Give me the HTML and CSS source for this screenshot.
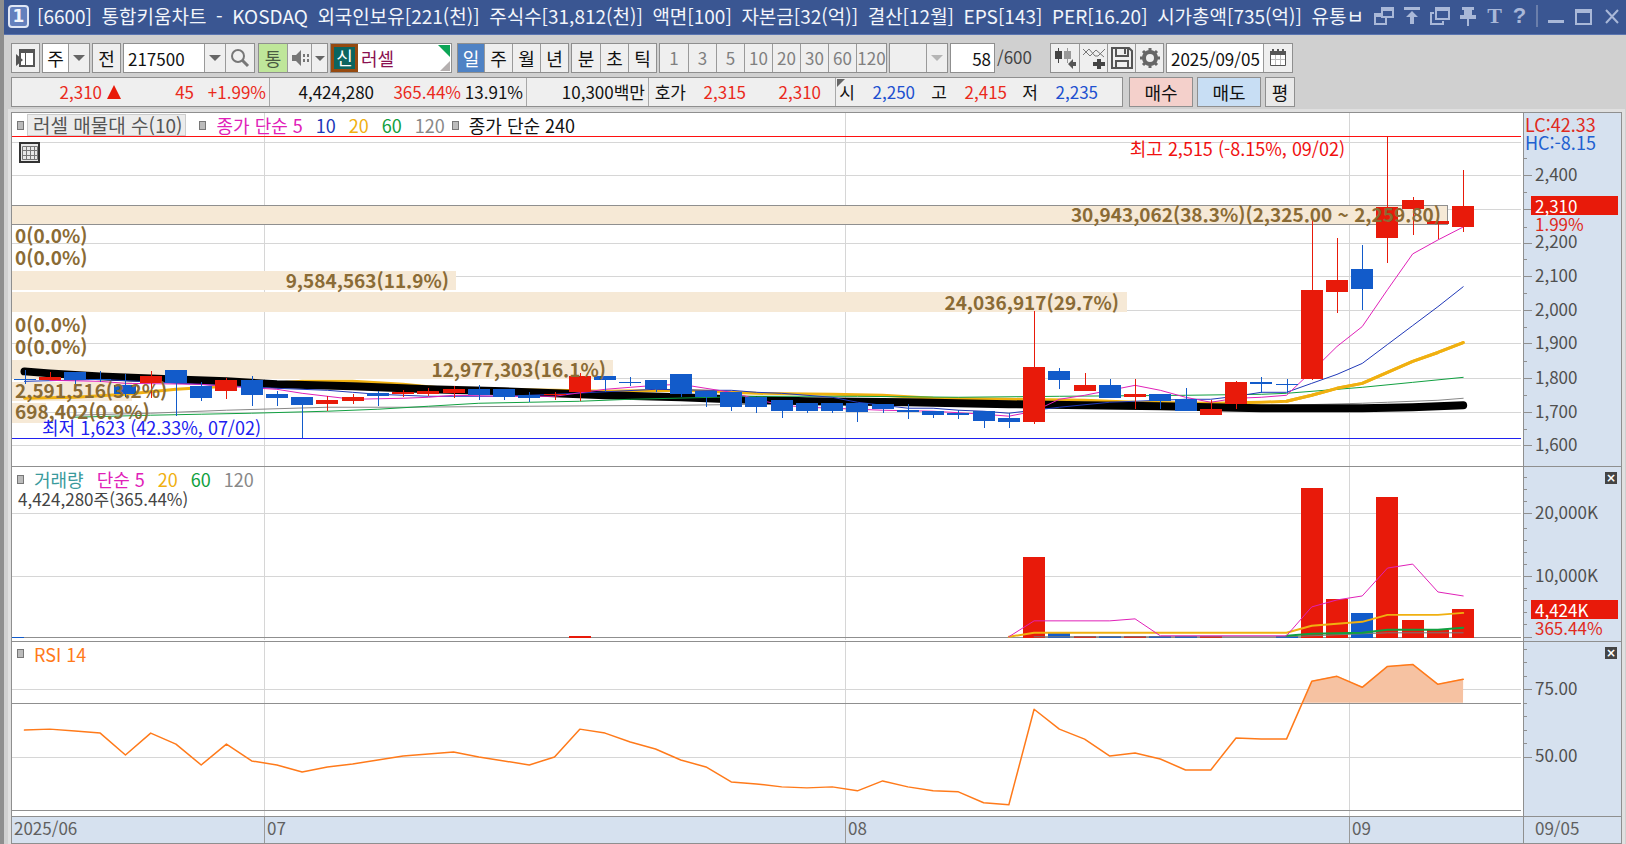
FILE: index.html
```html
<!DOCTYPE html>
<html lang="ko">
<head>
<meta charset="utf-8">
<title>[6600] 통합키움차트</title>
<link rel="stylesheet" href="styles.css">
</head>
<body>
<div class="window">
  <header class="titlebar">
    <span class="badge">1</span>
    <h1 class="title"><span>[6600]</span><span>통합키움차트</span><span>-</span><span>KOSDAQ</span><span>외국인보유[221(천)]</span><span>주식수[31,812(천)]</span><span>액면[100]</span><span>자본금[32(억)]</span><span>결산[12월]</span><span>EPS[143]</span><span>PER[16.20]</span><span>시가총액[735(억)]</span><span>유통ㅂ</span></h1>
    <div class="win-tools">
      <button aria-label="창 분리"><svg width="20" height="20"><path d="M8 2h11v9H8zM8 4h11M8 8H1v10h11v-7M1 10h7" /></svg></button>
      <button aria-label="맨 위로"><svg width="20" height="20"><path class="f" d="M2 1h16v3H2zM10 5l6 6h-4v7H8v-7H4z" /></svg></button>
      <button aria-label="창 복사"><svg width="20" height="20"><path d="M6 2h13v11H6zM6 4h13M4 7H1v11h12v-3" /></svg></button>
      <button aria-label="고정"><svg width="20" height="20"><path class="f" d="M4 1h12v3h-2v5h4v4h-7v7H9v-7H2V9h4V4H4z" /></svg></button>
      <button aria-label="글꼴" class="glyph serif">T</button>
      <button aria-label="도움말" class="glyph">?</button>
      <i class="win-sep"></i>
      <button aria-label="최소화"><svg width="20" height="20"><path class="f" d="M2 14h16v3H2z" /></svg></button>
      <button aria-label="최대화"><svg width="20" height="20"><path d="M2 4h15v14H2z" /><path class="f" d="M2 3h15v4H2z" /></svg></button>
      <button aria-label="닫기"><svg width="20" height="20"><path d="M4 4l12 13M16 4L4 17" /></svg></button>
    </div>
  </header>

  <div class="toolbar">
    <div class="group"><button class="cell w27" aria-label="패널"><svg width="22" height="22"><path fill="#fff" stroke="#555" stroke-width="2" d="M5 3h14v16H5z"/><path fill="#555" d="M4 2h16v4H4zM10 6h1v13h-1zM1 7l7 6-7 6z"/></svg></button></div>
    <div class="group"><button class="cell w25 white">주</button><button class="cell w21" aria-label="주기 선택"><i class="caret"></i></button></div>
    <div class="group"><button class="cell w27">전</button></div>
    <div class="group search"><input class="cell code" aria-label="종목코드" value="217500"><button class="cell w21" aria-label="종목 목록"><i class="caret"></i></button><button class="cell w29" aria-label="종목 검색"><svg width="20" height="20"><g fill="none" stroke="#777"><circle cx="8" cy="8" r="6" stroke-width="2"/><path stroke-width="3" d="M12 12l6 6"/></g></svg></button></div>
    <div class="group"><button class="cell w28 green">통</button><button class="cell w24" aria-label="소리"><svg width="20" height="20"><path fill="#777" d="M2 7h4l5-5v16l-5-5H2zM13 6h2v3h-2zM17 6h2v3h-2zM13 11h2v3h-2zM17 11h2v3h-2z"/></svg></button><button class="cell w15" aria-label="소리 설정"><i class="caret small"></i></button></div>
    <div class="group stock"><span class="sin">신</span><input class="cell name" aria-label="종목명" value="러셀"></div>
    <div class="group"><button class="cell w26 active">일</button><button class="cell w28">주</button><button class="cell w28">월</button><button class="cell w28">년</button></div>
    <div class="group"><button class="cell w28">분</button><button class="cell w28">초</button><button class="cell w28">틱</button></div>
    <div class="group mins"><button class="cell">1</button><button class="cell">3</button><button class="cell">5</button><button class="cell">10</button><button class="cell">20</button><button class="cell">30</button><button class="cell">60</button><button class="cell">120</button></div>
    <div class="group"><span class="cell w35"></span><button class="cell w21" aria-label="분 선택" disabled><i class="caret pale"></i></button></div>
    <div class="group"><input class="cell count" aria-label="봉 개수" value="58"></div>
    <span class="total">/600</span>
    <div class="group"><button class="cell w28" aria-label="봉 추가"><svg width="24" height="24"><path fill="#444" d="M2 5h7v8H2zM5 2h1v15H5z"/><path fill="#999" d="M11 5h7v8h-7zM14 2h1v15h-1z"/><path fill="#555" d="M15 18l5-5v3h3v4h-3v3z"/></svg></button><button class="cell w28" aria-label="지표 추가"><svg width="24" height="24"><path fill="none" stroke="#777" d="M1 9l6-6 6 7 3 0 7-7M1 3l7 7 6-6 8 7"/><path fill="#444" d="M15 13h4v3h4v4h-4v3h-4v-3h-4v-4h4z"/></svg></button><button class="cell w28" aria-label="저장"><svg width="24" height="24"><path fill="none" stroke="#555" stroke-width="2" d="M2 2h17l3 3v17H2zM6 2v8h12V2M6 22v-7h12v7M15 3v5"/></svg></button><button class="cell w28" aria-label="설정"><svg width="22" height="22"><circle cx="11" cy="11" r="6" fill="none" stroke="#666" stroke-width="4"/><path stroke="#666" stroke-width="3" d="M11 1v4M11 17v4M1 11h4M17 11h4M4 4l3 3M15 15l3 3M18 4l-3 3M7 15l-3 3"/></svg></button></div>
    <div class="group"><input class="cell date" aria-label="날짜" value="2025/09/05"><button class="cell w29" aria-label="달력"><svg width="20" height="20"><path fill="#fff" stroke="#555" d="M2.500 4.500h15v13h-15z"/><path stroke="#bbb" d="M7.500 7v10M12.500 7v10M3 11.500h14"/><path fill="#555" d="M2 3h16v4H2zM4 1h2v3H4zM9 1h2v3H9zM14 1h2v3h-2z"/></svg></button></div>
  </div>

  <div class="inforow">
    <div class="quote">
      <div class="sec"><span class="up c90">2,310</span><svg class="tri" width="14" height="14"><path fill="#e81a0a" d="M7 0l7 14H0z"/></svg><span class="up c73">45</span><span class="up c72">+1.99%</span></div>
      <div class="sec"><span class="c104">4,424,280</span><span class="up c87">365.44%</span><span class="c62">13.91%</span></div>
      <div class="sec"><span class="c118">10,300백만</span></div>
      <div class="sec hoga"><span class="c40">호가</span><span class="up c60">2,315</span><span class="up c75">2,310</span></div>
      <div class="sec mark"><span class="c18">시</span><span class="down c60">2,250</span><span class="c32">고</span><span class="up c60">2,415</span><span class="c31">저</span><span class="down c60">2,235</span></div>
    </div>
    <button class="order buy">매수</button>
    <button class="order sell">매도</button>
    <button class="order flat">평</button>
  </div>

  <main class="chart">
    <section class="pane price" aria-label="가격">
      <div class="plot" id="price-plot">
        <div class="legend"><i class="sq"></i><span class="sel">러셀 매물대 수(10)</span><i class="sq"></i><span class="m5 first">종가 단순 5</span><span class="m10">10</span><span class="m20">20</span><span class="m60">60</span><span class="m120">120</span><i class="sq near"></i><span class="m240">종가 단순 240</span></div>
        <button class="gridbtn" aria-label="표 보기"><svg width="16" height="16"><path fill="none" stroke="#777" d="M.5 1.500h15v13H.5zM.5 5.500h15M.5 10.500h15M4.500 2v12M8.500 2v12M12.500 2v12"/></svg></button>
      </div>
      <div class="axis" id="price-axis"></div>
    </section>
    <section class="pane volume" aria-label="거래량">
      <div class="plot" id="volume-plot">
        <div class="legend"><i class="sq"></i><span class="vol">거래량</span><span class="m5">단순 5</span><span class="m20">20</span><span class="m60">60</span><span class="m120">120</span></div>
        <p class="volnow">4,424,280주(365.44%)</p>
      </div>
      <div class="axis" id="volume-axis"><button class="close" aria-label="거래량 닫기">×</button></div>
    </section>
    <section class="pane rsi" aria-label="RSI">
      <div class="plot" id="rsi-plot">
        <div class="legend"><i class="sq"></i><span class="rsitxt">RSI 14</span></div>
      </div>
      <div class="axis" id="rsi-axis"><button class="close" aria-label="RSI 닫기">×</button></div>
    </section>
    <footer class="dates">
      <div class="plot" id="dates"></div>
      <div class="axis last">09/05</div>
    </footer>
  </main>
</div>
<script src="chart.js"></script>
</body>
</html>
```
FILE: styles.css
```css
* { box-sizing: border-box; }
body {
  margin: 0;
  background: #d0d0d0;
  font-family: "Noto Sans CJK KR", sans-serif;
  font-size: 17px;
  color: #111;
}
button, input {
  font: inherit;
  color: inherit;
  margin: 0;
  padding: 0;
  border: 0;
  background: none;
  border-radius: 0;
}
.window {
  height: 100vh;
  display: flex;
  flex-direction: column;
  border-left: 4px solid #8e8e8e;
}

/* title bar */
.titlebar {
  flex: none;
  height: 35px;
  padding: 0 4px 2px 4px;
  display: flex;
  align-items: center;
  background: #3a5692;
  border-bottom: 1px solid #5a75b0;
  color: #f2f5fb;
}
.badge {
  flex: none;
  width: 21px;
  height: 23px;
  border: 2px solid #dfe6f5;
  border-radius: 4px;
  background: #6480bd;
  font: bold 17px/19px "DejaVu Sans", sans-serif;
  text-align: center;
}
.title {
  flex: 1;
  min-width: 0;
  margin: 0 10px 0 8px;
  display: flex;
  justify-content: space-between;
  overflow: hidden;
  white-space: nowrap;
  font-size: 19px;
  line-height: 30px;
  font-weight: normal;
}
.win-tools { flex: none; display: flex; align-items: center; gap: 8px; color: #a9b8d8; }
.win-tools button { width: 20px; height: 22px; }
.win-tools svg { display: block; fill: none; stroke: #a9b8d8; stroke-width: 2; }
.win-tools .f { fill: #a9b8d8; stroke: none; }
.win-tools .glyph { width: 17px; font: bold 22px/22px "Liberation Sans", sans-serif; }
.win-tools .serif { font-family: "Liberation Serif", serif; }
.win-sep { width: 2px; height: 22px; background: #6b7fab; }

/* toolbar */
.toolbar {
  flex: none;
  display: flex;
  gap: 2px;
  padding: 8px 7px 4px;
  font-size: 18px;
}
.group { flex: none; display: flex; height: 30px; border: 1px solid #8f8f8f; }
.cell {
  height: 28px;
  display: flex;
  align-items: center;
  justify-content: center;
  background: #efefef;
  line-height: 26px;
}
.cell + .cell { border-left: 1px solid #9a9a9a; }
.w15 { width: 16px; } .w21 { width: 21px; } .w24 { width: 24px; } .w25 { width: 25px; } .w26 { width: 26px; }
.w27 { width: 27px; } .w28 { width: 28px; } .w29 { width: 29px; } .w35 { width: 36px; }
.white, input.cell { background: #fff; }
.green { background: #bfe69a; color: #4a5a42; }
.active { background: #4f82c4; color: #fff; }
input.cell { font-size: 17px; }
.code { width: 80px; padding-left: 4px; }
.count { width: 43px; text-align: right; padding-right: 3px; }
.date { width: 96px; padding-left: 4px; }
.name.cell { width: 93px; padding-left: 3px; color: #8a1150; font-size: 18px; }
.search { margin-right: 1px; }
.stock { position: relative; margin-right: 3px; }
.stock::before, .stock::after { content: ""; position: absolute; right: 1px; border: 6px solid transparent; }
.stock::before { top: 1px; border-top-color: #0ca556; border-right-color: #0ca556; }
.stock::after { bottom: 1px; border-width: 5px; border-bottom-color: #b5b0b0; border-right-color: #b5b0b0; }
.sin {
  width: 27px;
  border: 3px solid #964a10;
  background: #0b6560;
  color: #fff;
  line-height: 20px;
  text-align: center;
}
.mins { font-size: 17px; }
.mins .cell { width: 28px; color: #808080; }
.mins .cell:last-child { width: 30px; }
.total { width: 51px; color: #444; font-size: 17px; line-height: 28px; }
.caret { border: 6px solid transparent; border-top-color: #666; border-bottom: 0; }
.caret.small { border-width: 5px; border-bottom: 0; }
.caret.pale { border-top-color: #b5b5b5; }

/* quote row */
.inforow { flex: none; display: flex; gap: 4px; padding: 0 7px 5px; }
.quote {
  width: 1112px;
  height: 30px;
  display: flex;
  background: #efefef;
  border: 1px solid #8f8f8f;
  line-height: 28px;
  white-space: nowrap;
}
.sec { display: flex; align-items: center; padding-right: 3px; }
.sec + .sec { border-left: 1px solid #a8a8a8; }
.sec span { text-align: right; }
.hoga { padding-right: 14px; }
.mark { position: relative; }
.mark::before { content: ""; position: absolute; left: 1px; top: 1px; border: 4px solid #666; border-right-color: transparent; border-bottom-color: transparent; }
.c18 { width: 19px; } .c31 { width: 31px; } .c32 { width: 32px; } .c40 { width: 37px; }
.c60 { width: 60px; } .c62 { width: 62px; } .c72 { width: 72px; } .c73 { width: 73px; }
.c75 { width: 75px; } .c87 { width: 87px; } .c90 { width: 90px; } .c104 { width: 104px; } .c118 { width: 118px; }
.tri { margin-left: 5px; }
.up { color: #ea2a1c; }
.down { color: #2050d0; }
.order { height: 30px; width: 64px; border: 1px solid #8f8f8f; font-size: 18px; line-height: 26px; }
.buy { margin-left: 2px; background: #f4d0cb; }
.sell { background: #c8def4; }
.flat { width: 30px; background: #e9e9e9; }

/* chart frame */
.chart {
  flex: 1;
  min-height: 0;
  display: flex;
  flex-direction: column;
  margin: 0 4px 0 7px;
  border: 1px solid #8f8f8f;
  border-bottom: 0;
  background: #fff;
  box-shadow: 0 0 0 3px #e0e0e0;
}
.pane { display: flex; min-height: 0; border-bottom: 1px solid #8f8f8f; }
.price { flex: 355 1 0; }
.volume { flex: 174 1 0; }
.rsi { flex: 175 1 0; }
.plot { position: relative; flex: 1; min-width: 0; }
.plot > svg { position: absolute; inset: 0; width: 100%; height: 100%; }
.axis { position: relative; flex: none; width: 98px; background: #d6e1ef; border-left: 1px solid #8f8f8f; color: #505050; }
.axis > svg { position: absolute; left: 0; top: 0; width: 10px; height: 100%; }
.tick, .note, .band { position: absolute; white-space: nowrap; line-height: 18px; margin-top: -9px; }
.tick { left: 11px; }
.tag { left: 7px; right: 3px; padding-left: 4px; background: #e81a0a; color: #fff; line-height: 19px; }
.pct { color: #e02a20; }
.edge { left: 1px; font-size: 18px; }
.lc { color: #e02a20; }
.hc { color: #2060d0; }
.band { font-size: 19px; font-weight: bold; color: #8a6b35; }
.note { font-size: 18px; }
.high { color: #f01010; }
.low { color: #2020f0; }
.legend { position: relative; z-index: 1; display: flex; align-items: center; gap: 13px; height: 24px; padding-left: 5px; font-size: 18px; white-space: nowrap; line-height: 20px; }
.sq { width: 7px; height: 9px; border: 1px solid #777; background: #bbb; }
.sq + span { margin-left: -3px; }
.sq.near { margin-left: -6px; }
.sq + .sel { margin-left: -10px; padding: 0 3px 0 5px; background: #ececec; border: 1px solid #ccc; color: #555; font-size: 19px; }
.m5 { color: #e020b8; } .m10 { color: #2038b8; } .m20 { color: #f0b010; } .m60 { color: #10a040; } .m120 { color: #888; }
.vol { color: #3a9a9c; }
.rsitxt { color: #ff7a1a; }
.volnow { position: relative; z-index: 1; margin: -2px 0 0 6px; line-height: 20px; color: #444; }
.gridbtn { position: relative; z-index: 1; display: flex; align-items: center; justify-content: center; width: 21px; height: 21px; margin: 5px 0 0 7px; border: 2px solid #333; background: #e8e8e8; }
.close { position: absolute; z-index: 1; right: 4px; top: 5px; width: 12px; height: 12px; background: #444; color: #fff; font: bold 12px/12px "DejaVu Sans", sans-serif; }
.dates { flex: none; height: 27px; display: flex; background: #d6e1ef; color: #606060; line-height: 22px; border-bottom: 1px solid #8f8f8f; }
.dates .plot { display: block; }
.dates span { position: absolute; top: 0; height: 100%; padding-left: 2px; }
.dates span + span { border-left: 1px solid #999; }
.last { padding-left: 11px; color: #606060; }
```
FILE: chart.js
```js
const NS = 'http://www.w3.org/2000/svg';
const RED = '#e81a0a', BLUE = '#125bca';
const X0 = 12, W = 1511;
const cx = i => 24.5 + i * 25.24;

// colour, body top, body bottom, wick top, wick bottom
const candles = [
  ['b',380,381,371,385],['r',378,381,373,381],['b',373,381,373,385],['b',380,381,372,383],['b',386,395,375,398],
  ['r',377,384,372,399],['b',371,384,371,417],['b',387,399,383,402],['r',381,392,379,400],['b',381,396,377,407],
  ['b',395,399,392,407],['b',398,406,398,439],['r',401,405,397,412],['r',398,402,395,405],['b',394,397,392,407],
  ['r',393,395,391,398],['r',392,395,389,397],['r',390,394,387,399],['b',390,396,386,401],['b',390,398,390,401],
  ['b',396,399,393,403],['r',395,396,393,401],['r',377,393,374,402],['b',377,381,377,393],['b',383,384,378,387],
  ['b',381,390,381,393],['b',375,395,375,398],['b',392,398,392,408],['b',393,408,393,412],['b',398,408,398,414],
  ['b',401,412,401,419],['b',404,412,404,414],['b',404,412,404,414],['b',404,413,404,423],['b',405,410,405,414],
  ['b',411,413,405,420],['b',412,416,412,419],['b',414,416,411,420],['b',412,422,412,429],['b',419,423,414,429],
  ['r',368,423,312,425],['b',372,381,369,390],['r',386,392,374,392],['b',386,399,380,399],['r',395,398,380,410],
  ['b',395,402,395,410],['b',400,412,389,412],['r',410,416,401,416],['r',383,405,382,410],['b',383,385,378,394],
  ['b',385,386,380,394],['r',291,380,220,381],['r',281,293,239,314],['b',270,290,246,311],['r',207,239,136,264],
  ['r',200,209,197,236],['r',221,224,221,240],['r',206,227,170,233]
];
// [candle index, y] knots
const ma = {
  m240: [[0,372],[1,374],[3,377],[6,380],[8,382],[10,385],[13,387],[16,390],[19,392],[21,394],[23,396],[26,398],[28,400],[31,402],[35,403],[39,405],[42,406],[45,407],[49,409],[53,409],[55,408],[57,406]],
  m120: [[2,416],[5,414],[8,411],[12,408],[15,408],[20,407],[26,406],[29,405],[50,406],[53,404],[54,403],[56,401],[57,399]],
  m20: [[0,399],[2,398],[4,395],[6,390],[8,387],[11,382],[13,382],[15,385],[17,390],[21,391],[23,392],[26,391],[28,393],[29,394],[32,395],[34,396],[36,399],[39,400],[42,401],[44,403],[47,404],[49,403],[50,402],[51,396],[52,389],[53,384],[54,373],[55,362],[56,353],[57,343]],
  m60: [[2,418],[5,416],[7,415],[9,414],[12,412],[14,410],[16,407],[18,404],[20,403],[22,402],[24,400],[29,397],[33,397],[37,398],[41,397],[46,396],[49,395],[50,394],[53,388],[55,383],[57,378]],
  m10: [[0,382],[3,380],[10,389],[12,391],[13,393],[14,395],[16,397],[18,397],[19,397],[21,395],[25,390],[27,391],[28,391],[29,393],[30,394],[32,398],[33,403],[35,409],[36,409],[37,411],[38,412],[39,414],[40,411],[41,408],[43,403],[44,402],[46,400],[47,400],[48,397],[49,393],[50,393],[51,384],[52,375],[53,364],[54,345],[55,326],[56,307],[57,287]],
  m5: [[1,381],[3,382],[4,384],[7,385],[8,387],[10,390],[11,394],[12,397],[13,400],[15,399],[16,398],[17,396],[19,397],[21,397],[23,390],[24,388],[25,386],[26,385],[27,389],[28,393],[29,400],[30,406],[31,408],[32,409],[33,410],[34,411],[36,412],[38,415],[39,417],[40,412],[41,400],[42,396],[43,391],[44,386],[45,391],[46,398],[47,403],[48,399],[49,398],[50,396],[51,372],[52,347],[53,327],[54,290],[55,254],[56,240],[57,227]]
};
const volumes = [[22,'r',638],[40,'r',558],[41,'b',635],[42,'r',638],[43,'b',638],[44,'r',638],[45,'b',638],[46,'b',638],[47,'r',638],[50,'b',638],[51,'r',489],[52,'r',601],[53,'b',615],[54,'r',498],[55,'r',622],[56,'r',632],[57,'r',611]];
const rsi = [730,729,731,733,755,733,744,765,744,761,765,772,767,764,760,756,754,752,757,761,765,757,729,733,742,749,760,767,782,784,787,788,787,791,781,787,791,792,803,805,709,729,739,756,753,759,770,770,738,739,739,681,676,687,666,664,684,679];

function svg(host, x, y, w, h) {
  const s = document.createElementNS(NS, 'svg');
  s.setAttribute('viewBox', [x, y, w, h].join(' '));
  s.setAttribute('preserveAspectRatio', 'none');
  host.prepend(s);
  return s;
}
function add(s, tag, attrs) {
  const e = document.createElementNS(NS, tag);
  for (const k in attrs) e.setAttribute(k, attrs[k]);
  s.append(e);
}
const rect = (s, x, y, w, h, fill) => add(s, 'rect', { x, y, width: w, height: h, fill, 'shape-rendering': 'crispEdges' });
const path = (s, pts, stroke, width) => add(s, 'polyline', { points: pts.map(p => cx(p[0]) + ',' + (p[1] + .5)).join(' '), fill: 'none', stroke, 'stroke-width': width, 'stroke-linejoin': 'round', 'stroke-linecap': 'round' });
function frame(id, top, height, rows) {
  const s = svg(document.getElementById(id), X0, top, W, height);
  rows.forEach(y => rect(s, X0, y, W - 2, 1, '#d6d6d6'));
  [264, 845, 1349].forEach(x => rect(s, x, top, 1, height, '#d6d6d6'));
  return s;
}
function label(host, cls, text, style) {
  const e = document.createElement('span');
  e.className = cls;
  e.textContent = text;
  Object.assign(e.style, style);
  host.append(e);
}
function axis(id, top, height, majors, minors, labels) {
  const host = document.getElementById(id);
  const s = svg(host, 0, top, 10, height);
  majors.forEach(y => rect(s, 0, y, 8, 1, '#8f8f8f'));
  minors.forEach(y => rect(s, 0, y, 3, 1, '#8f8f8f'));
  labels.forEach(([y, text, cls]) => label(host, 'tick ' + (cls || ''), text, { top: (y - top) / height * 100 + '%' }));
}

// price pane
const PT = 113, PH = 355;
const p = frame('price-plot', PT, PH, [142, 175, 209, 244, 277, 311, 344, 379, 413, 446]);
rect(p, 12, 205, 1436, 20, '#8f8f8f');
rect(p, 12, 206, 1435, 18, '#f6e9d6');
[[272,19,444],[293,20,1115],[361,19,601],[383,19,120],[404,20,34]].forEach(b => rect(p, 12, b[0], b[2], b[1], '#f6e9d6'));
rect(p, 12, 136, 1509, 1, '#ff1010');
rect(p, 12, 439, 1509, 1, '#2020f0');
path(p, ma.m120, '#888', 1);
path(p, ma.m20, '#f0b010', 3);
path(p, ma.m240, '#000', 8);
path(p, ma.m60, '#10a040', 1);
path(p, ma.m10, '#2038b8', 1);
path(p, ma.m5, '#e020b8', 1);
path(p, ma.m20.slice(-8), '#f0b010', 3);
candles.forEach(([c, t, b, wt, wb], i) => {
  const col = c === 'r' ? RED : BLUE, x = Math.round(cx(i));
  rect(p, x - 11, t, 22, Math.max(1, b - t), col);
  rect(p, x, wt, 1, wb - wt, col);
});
const pp = document.getElementById('price-plot');
const yp = y => (y - PT) / PH * 100 + '%';
const xl = x => (x - X0) / W * 100 + '%';
const xr = x => (X0 + W - x) / W * 100 + '%';
[[236,'0(0.0%)'],[258,'0(0.0%)'],[325,'0(0.0%)'],[347,'0(0.0%)'],[391,'2,591,516(3.2%)'],[412,'698,402(0.9%)']]
  .forEach(([y, t]) => label(pp, 'band', t, { left: xl(15), top: yp(y) }));
[[214,1441,'30,943,062(38.3%)(2,325.00 ~ 2,259.80)'],[281,449,'9,584,563(11.9%)'],[303,1119,'24,036,917(29.7%)'],[370,606,'12,977,303(16.1%)']]
  .forEach(([y, x, t]) => label(pp, 'band', t, { right: xr(x), top: yp(y) }));
label(pp, 'note high', '최고 2,515 (-8.15%, 09/02)', { right: xr(1345), top: yp(148) });
label(pp, 'note low', '최저 1,623 (42.33%, 07/02)', { left: xl(42), top: yp(428) });
axis('price-axis', PT, PH, [175,209,244,277,311,344,379,413,446], [158,192,227,260,294,328,362,396,430], [
  [124,'LC:42.33','edge lc'],[142,'HC:-8.15','edge hc'],[174,'2,400'],[205,'2,310','tag'],[224,'1.99%','pct'],
  [242,'2,200'],[276,'2,100'],[310,'2,000'],[343,'1,900'],[378,'1,800'],[412,'1,700'],[445,'1,600']]);

// volume pane
const v = frame('volume-plot', 468, 174, [514, 577]);
rect(v, 12, 639, 1509, 1, '#8f8f8f');
rect(v, 12, 639, 12, 1, BLUE);
volumes.forEach(([i, c, t]) => rect(v, Math.round(cx(i)) - 11, t, 22, 640 - t, c === 'r' ? RED : BLUE));
path(v, [[40,638],[50,638],[52,636],[54,634],[57,634]], '#777', 1);
path(v, [[50,637],[51,635],[53,634],[54,631],[56,631],[57,629]], '#10a040', 2);
path(v, [[39,638],[40,634],[50,634],[51,627],[52,625],[53,623],[54,616],[56,616],[57,614]], '#f0b010', 2);
path(v, [[39,638],[40,622],[43,622],[44,620],[45,637],[50,637],[51,608],[52,601],[53,597],[54,569],[55,565],[56,593],[57,597]], '#e020b8', 1);
axis('volume-axis', 468, 174, [514, 577, 639], [478,490,502,529,541,553,565,590,602,614,626], [
  [513,'20,000K'],[576,'10,000K'],[610,'4,424K','tag'],[629,'365.44%','pct']]);

// RSI pane
const r = frame('rsi-plot', 642, 175, [689, 757]);
const line = rsi.map((y, i) => [i, y]);
add(r, 'polygon', { fill: '#f6c2a2', points: '1303,703 ' + line.slice(51).map(q => cx(q[0]) + ',' + q[1]).join(' ') + ' 1463,703' });
rect(r, 12, 703, 1509, 1, '#8f8f8f');
rect(r, 12, 811, 1509, 1, '#8f8f8f');
path(r, line, '#ff7a1a', 1.5);
axis('rsi-axis', 642, 175, [689, 757], [649,662,676,703,716,730,743], [[688,'75.00'],[756,'50.00']]);

// date row
const d = document.getElementById('dates');
[[12,'2025/06'],[264,'07'],[845,'08'],[1349,'09']].forEach(([x, t]) => label(d, '', t, { left: xl(x) }));
```
